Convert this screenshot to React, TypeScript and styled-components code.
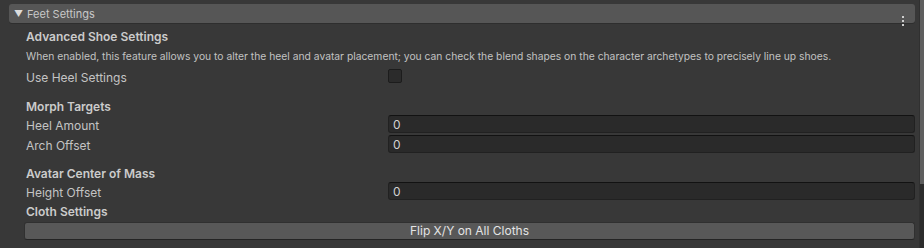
import React from 'react';
import styled, { createGlobalStyle } from 'styled-components';

const GlobalStyle = createGlobalStyle`
  html, body {
    margin: 0;
    padding: 0;
    background: #383838;
  }
  body {
    font-family: Inter, 'Noto Sans', sans-serif;
    color: #c4c4c4;
    -webkit-font-smoothing: antialiased;
  }
`;

const Page = styled.div`
  display: flex;
  width: 924px;
  height: 248px;
  overflow: hidden;
  background: #383838;
`;

const Inspector = styled.div`
  flex: 1;
  display: flex;
  flex-direction: column;
  padding: 4px 4px 0 9px;
`;

const Scrollbar = styled.div`
  width: 4px;
  display: flex;
  flex-direction: column;
  background: #2c2c2c;
  border-left: 1px solid #303030;
`;

const Thumb = styled.div`
  height: 184px;
  background: #5e5e5e;
`;

const FoldoutHeader = styled.div`
  display: flex;
  align-items: center;
  height: 19px;
  padding-left: 5px;
  background: #565656;
  border-radius: 3px;
  box-shadow: 0 1px 0 #2e2e2e;
  position: relative;
  font-size: 11px;
  color: #c8c8c8;
`;

const Arrow = styled.span`
  font-size: 9px;
  width: 13px;
  color: #dcdcdc;
`;

const Kebab = styled.span`
  position: absolute;
  right: 11px;
  top: 12px;
  display: flex;
  flex-direction: column;
  gap: 2px;
  & > i {
    width: 2px;
    height: 2px;
    background: #cfcfcf;
  }
`;

const Body = styled.div`
  display: flex;
  flex-direction: column;
  padding-left: 17px;
`;

const SectionTitle = styled.div<{ $top: number; $lh?: number }>`
  height: 18px;
  line-height: ${(p) => p.$lh ?? 18}px;
  margin-top: ${(p) => p.$top}px;
  font-size: 12px;
  font-weight: 600;
  color: #cbcbcb;
`;

const Description = styled.div`
  height: 20px;
  line-height: 21px;
  font-size: 10.3px;
  color: #c2c2c2;
  white-space: nowrap;
`;

const Row = styled.div<{ $top?: number }>`
  display: grid;
  grid-template-columns: 362px 1fr;
  align-items: center;
  height: 20px;
  margin-top: ${(p) => p.$top ?? 0}px;
`;

const Label = styled.span`
  padding-top: 2px;
  font-size: 12px;
  color: #c4c4c4;
`;

const Checkbox = styled.span`
  width: 12px;
  height: 12px;
  border: 1px solid #1c1c1c;
  border-radius: 2px;
  background: #2b2b2b;
`;

const Field = styled.div`
  height: 16px;
  line-height: 17px;
  padding-left: 4px;
  background: #2a2a2a;
  border: 1px solid #212121;
  border-top-color: #121212;
  border-radius: 3px;
  font-size: 12px;
  color: #d2d2d2;
`;

const Button = styled.div`
  height: 16px;
  line-height: 16px;
  margin: 2px 0 0 -2px;
  text-align: center;
  background: #585858;
  border: 1px solid #303030;
  border-bottom-color: #242424;
  border-radius: 3px;
  font-size: 12px;
  color: #e4e4e4;
`;

const FloatField: React.FC<{ label: string; value: string; top?: number }> = ({ label, value, top }) => (
  <Row $top={top}>
    <Label>{label}</Label>
    <Field>{value}</Field>
  </Row>
);

export default function App() {
  return (
    <Page>
      <GlobalStyle />
      <Inspector>
        <FoldoutHeader>
          <Arrow>▼</Arrow>
          Feet Settings
          <Kebab>
            <i />
            <i />
            <i />
          </Kebab>
        </FoldoutHeader>
        <Body>
          <SectionTitle $top={5}>Advanced Shoe Settings</SectionTitle>
          <Description>
            When enabled, this feature allows you to alter the heel and avatar placement; you can check the blend
            shapes on the character archetypes to precisely line up shoes.
          </Description>
          <Row>
            <Label>Use Heel Settings</Label>
            <Checkbox />
          </Row>
          <SectionTitle $top={10} $lh={22}>Morph Targets</SectionTitle>
          <FloatField label="Heel Amount" value="0" />
          <FloatField label="Arch Offset" value="0" />
          <SectionTitle $top={9} $lh={22}>Avatar Center of Mass</SectionTitle>
          <FloatField label="Height Offset" value="0" />
          <SectionTitle $top={1} $lh={20}>Cloth Settings</SectionTitle>
          <Button>Flip X/Y on All Cloths</Button>
        </Body>
      </Inspector>
      <Scrollbar>
        <Thumb />
      </Scrollbar>
    </Page>
  );
}
